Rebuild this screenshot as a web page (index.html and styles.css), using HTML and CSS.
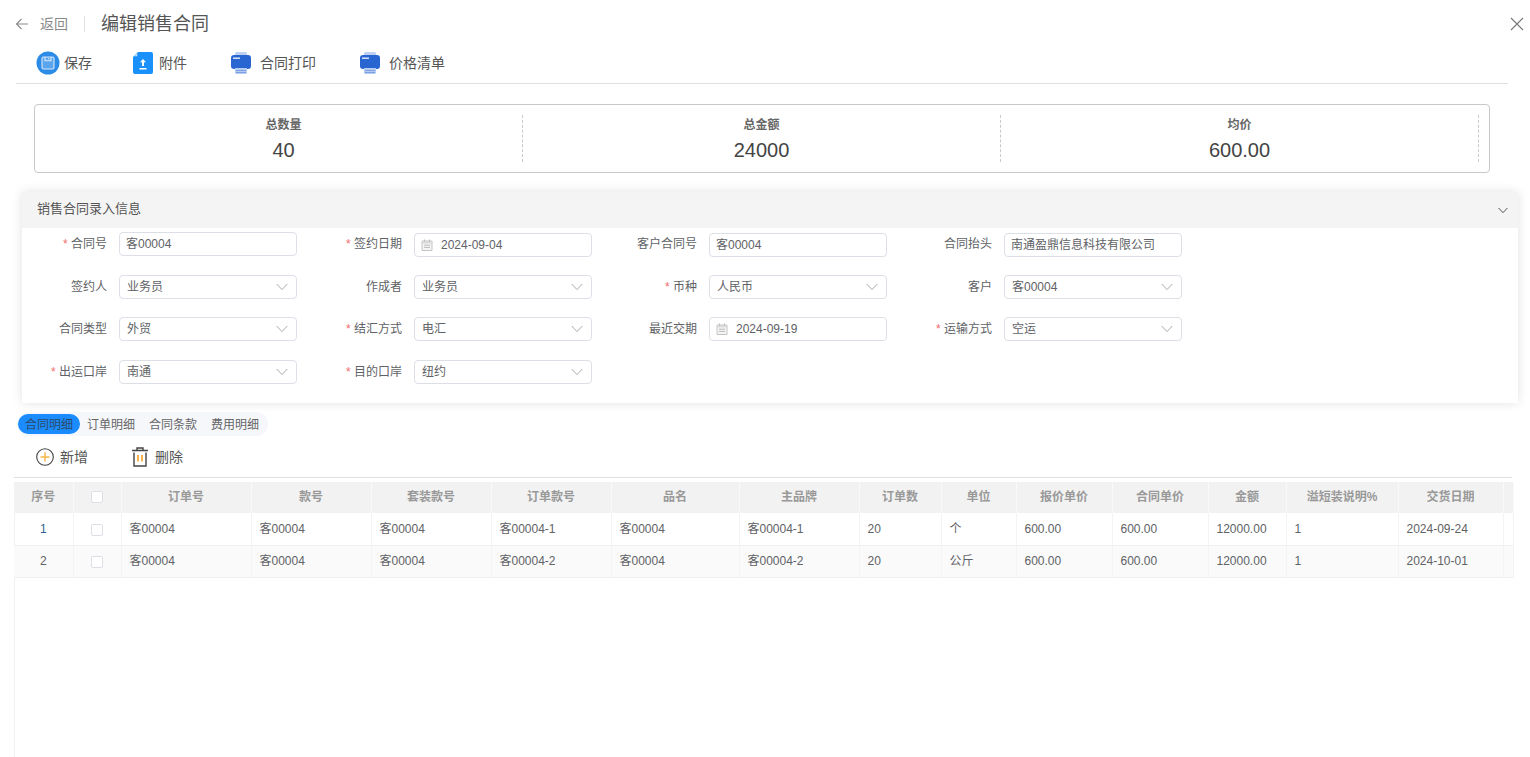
FILE: index.html
```html
<!DOCTYPE html>
<html lang="zh-CN">
<head>
<meta charset="utf-8">
<title>编辑销售合同</title>
<link rel="stylesheet" href="styles.css">
</head>
<body>
<svg class="defs" width="0" height="0" aria-hidden="true">
  <defs>
    <symbol id="chev" viewBox="0 0 12 8"><path d="M.7 1l5.300 5.600L11.300 1" fill="none" stroke="currentColor" stroke-width="1"/></symbol>
    <symbol id="cal" viewBox="0 0 12 12"><path d="M1 2h10v9.500H1z" fill="#f4f4f4" stroke="#c4c4c4"/><path d="M1 2h10v2.300H1z" fill="#d8d8d8"/><path d="M3.500.500v2M8.500.500v2M3 6.200h6M3 8.400h6" stroke="#bbb" fill="none"/></symbol>
    <symbol id="printer" viewBox="0 0 20 22">
      <path d="M5.500 0h9A1.500 1.500 0 0 1 16 1.500V5H4V1.500A1.500 1.500 0 0 1 5.500 0z" fill="#bcd0f2"/>
      <rect y="3" width="20" height="14" rx="3" fill="#2a66d2"/>
      <path d="M4 16h12v4.500a1.500 1.500 0 0 1-1.500 1.500h-9A1.500 1.500 0 0 1 4 20.500z" fill="#b7ccf1"/>
      <rect x="2" y="5.500" width="7" height="1.400" fill="#e6eefc"/>
      <path d="M5 18.500h10M5 20.500h10" stroke="#7da0e4" stroke-width="1"/>
    </symbol>
  </defs>
</svg>

<header class="topbar">
  <svg class="back-icon" viewBox="0 0 14 12" width="14" height="12"><path d="M13 6H1.500M6.500 1l-5 5 5 5" fill="none" stroke="#8a8a8a" stroke-width="1.100"/></svg>
  <span class="back-text">返回</span>
  <span class="top-sep"></span>
  <h1 class="title">编辑销售合同</h1>
  <svg class="close-icon" viewBox="0 0 14 14" width="14" height="14"><path d="M1 1l12 12M13 1L1 13" stroke="#777" stroke-width="1.100" fill="none"/></svg>
</header>

<nav class="toolbar">
  <button class="tool tool-save">
    <svg viewBox="0 0 24 24" width="24" height="24"><circle cx="12" cy="12" r="11.500" fill="#2b8be6"/><rect x="6" y="6" width="12" height="12" rx="1.500" fill="#5aa5ec" stroke="#d5e8fb" stroke-width="1.100"/><path d="M9 6v3.800h6V6" fill="none" stroke="#d5e8fb" stroke-width="1.100"/><path d="M12.800 7v1.500" stroke="#d5e8fb"/></svg>
    <span>保存</span>
  </button>
  <button class="tool tool-attach">
    <svg viewBox="0 0 20 22" width="20" height="22"><path d="M5 0h13a2 2 0 0 1 2 2v18a2 2 0 0 1-2 2H2a2 2 0 0 1-2-2V5z" fill="#1a90fb"/><path d="M1 4.300L4.300 1v3.300z" fill="#bfe0fd"/><path d="M10 7l3 3.200h-2V14H9v-3.800H7zM6.500 16h7v1.500h-7z" fill="#fff"/></svg>
    <span>附件</span>
  </button>
  <button class="tool tool-print">
    <svg width="20" height="22"><use href="#printer"/></svg>
    <span>合同打印</span>
  </button>
  <button class="tool tool-price">
    <svg width="20" height="22"><use href="#printer"/></svg>
    <span>价格清单</span>
  </button>
</nav>

<section class="summary">
  <div class="stat"><div class="stat-label">总数量</div><div class="stat-value">40</div></div>
  <div class="stat"><div class="stat-label">总金额</div><div class="stat-value">24000</div></div>
  <div class="stat"><div class="stat-label">均价</div><div class="stat-value">600.00</div></div>
</section>

<section class="panel">
  <div class="panel-head">
    <span>销售合同录入信息</span>
    <svg width="10" height="7" class="panel-chev"><use href="#chev"/></svg>
  </div>
  <div class="form">
    <div class="field"><label class="req">合同号</label><div class="control">客00004</div></div>
    <div class="field"><label class="req">签约日期</label><div class="control date"><svg width="12" height="12"><use href="#cal"/></svg><span>2024-09-04</span></div></div>
    <div class="field"><label>客户合同号</label><div class="control">客00004</div></div>
    <div class="field"><label>合同抬头</label><div class="control">南通盈鼎信息科技有限公司</div></div>

    <div class="field"><label>签约人</label><div class="control select"><span>业务员</span><svg width="12" height="8"><use href="#chev"/></svg></div></div>
    <div class="field"><label>作成者</label><div class="control select"><span>业务员</span><svg width="12" height="8"><use href="#chev"/></svg></div></div>
    <div class="field"><label class="req">币种</label><div class="control select"><span>人民币</span><svg width="12" height="8"><use href="#chev"/></svg></div></div>
    <div class="field"><label>客户</label><div class="control select"><span>客00004</span><svg width="12" height="8"><use href="#chev"/></svg></div></div>

    <div class="field"><label>合同类型</label><div class="control select"><span>外贸</span><svg width="12" height="8"><use href="#chev"/></svg></div></div>
    <div class="field"><label class="req">结汇方式</label><div class="control select"><span>电汇</span><svg width="12" height="8"><use href="#chev"/></svg></div></div>
    <div class="field"><label>最近交期</label><div class="control date"><svg width="12" height="12"><use href="#cal"/></svg><span>2024-09-19</span></div></div>
    <div class="field"><label class="req">运输方式</label><div class="control select"><span>空运</span><svg width="12" height="8"><use href="#chev"/></svg></div></div>

    <div class="field"><label class="req">出运口岸</label><div class="control select"><span>南通</span><svg width="12" height="8"><use href="#chev"/></svg></div></div>
    <div class="field"><label class="req">目的口岸</label><div class="control select"><span>纽约</span><svg width="12" height="8"><use href="#chev"/></svg></div></div>
  </div>
</section>

<div class="tabs">
  <span class="tab active">合同明细</span>
  <span class="tab">订单明细</span>
  <span class="tab">合同条款</span>
  <span class="tab">费用明细</span>
</div>

<div class="subbar">
  <button class="tool tool-add">
    <svg viewBox="0 0 18 18" width="18" height="18"><circle cx="9" cy="9" r="8.300" fill="none" stroke="#444" stroke-width="1.100"/><path d="M9 4.500v9M4.500 9h9" stroke="#f7b64a" stroke-width="1.500"/></svg>
    <span>新增</span>
  </button>
  <button class="tool tool-del">
    <svg viewBox="0 0 16 20" width="16" height="20"><path d="M0 3.500h16M5 3V1h6v2" fill="none" stroke="#444" stroke-width="1.400"/><path d="M2 5.500v13.500h12V5.500" fill="none" stroke="#444" stroke-width="1.400"/><path d="M6 8v6.500M10 8v6.500" stroke="#f7b64a" stroke-width="2"/></svg>
    <span>删除</span>
  </button>
</div>

<div class="grid-wrap">
<table class="grid">
  <colgroup>
    <col class="c-no"><col class="c-chk"><col class="c-130"><col class="c-120"><col class="c-120"><col class="c-120"><col class="c-128"><col class="c-120"><col class="c-82"><col class="c-75"><col class="c-96"><col class="c-96"><col class="c-78"><col class="c-112"><col class="c-105"><col class="c-10">
  </colgroup>
  <thead>
    <tr>
      <th>序号</th><th><i class="chk"></i></th><th>订单号</th><th>款号</th><th>套装款号</th><th>订单款号</th><th>品名</th><th>主品牌</th><th>订单数</th><th>单位</th><th>报价单价</th><th>合同单价</th><th>金额</th><th>溢短装说明%</th><th>交货日期</th><th></th>
    </tr>
  </thead>
  <tbody>
    <tr>
      <td class="num first">1</td><td class="num"><i class="chk"></i></td><td>客00004</td><td>客00004</td><td>客00004</td><td>客00004-1</td><td>客00004</td><td>客00004-1</td><td>20</td><td>个</td><td>600.00</td><td>600.00</td><td>12000.00</td><td>1</td><td>2024-09-24</td><td></td>
    </tr>
    <tr>
      <td class="num">2</td><td class="num"><i class="chk"></i></td><td>客00004</td><td>客00004</td><td>客00004</td><td>客00004-2</td><td>客00004</td><td>客00004-2</td><td>20</td><td>公斤</td><td>600.00</td><td>600.00</td><td>12000.00</td><td>1</td><td>2024-10-01</td><td></td>
    </tr>
  </tbody>
</table>
</div>
</body>
</html>
```
FILE: styles.css
```css
* { box-sizing: border-box; }
html, body { margin: 0; height: 757px; overflow: hidden; }
body {
  background: #fff;
  color: #606266;
  font-family: "Liberation Sans", "Noto Sans CJK SC", sans-serif;
  font-size: 12px;
}
.defs { position: absolute; }
button { font: inherit; color: inherit; background: none; border: 0; padding: 0; }

.topbar { height: 46px; display: flex; align-items: center; padding: 2px 6px 0 15px; }
.back-icon { margin-right: 11px; }
.back-text { font-size: 14px; color: #8a8a8a; line-height: 20px; }
.top-sep { width: 1px; height: 16px; background: #e2e4e8; margin: 0 16px; }
.title { margin: 0; font-size: 18px; font-weight: 400; color: #555; flex: 1; line-height: 24px; }

.toolbar {
  height: 38px; margin: 0 22px 0 16px; padding: 0 0 4px 20px;
  display: flex; align-items: center; border-bottom: 1px solid #e0e0e0;
}
.tool { display: flex; align-items: center; font-size: 14px; color: #555; line-height: 20px; }
.tool-save { gap: 4px; width: 97px; }
.tool-attach { gap: 6px; width: 98px; }
.tool-print { gap: 9px; width: 129px; }
.tool-price { gap: 9px; }

.summary {
  margin: 20px 40px 0 34px; height: 69px; padding: 10px;
  border: 1px solid #c8c9cc; border-radius: 4px; display: flex;
}
.stat { width: 478px; height: 47px; border-right: 1px dashed #c8c9cc; text-align: center; padding-top: 2px; }
.stat-label { font-size: 12px; font-weight: 700; color: #666; line-height: 16px; }
.stat-value { font-size: 20px; color: #444; line-height: 26px; margin-top: 4px; }

.panel {
  margin: 19px 12px 0 22px; height: 211px; background: #fff;
  box-shadow: 0 0 10px rgba(0,0,0,.12);
}
.panel-head {
  height: 36px; background: #f4f4f4; display: flex; align-items: center; justify-content: space-between;
  padding: 0 10px 3px 15px; font-size: 13px; color: #555; line-height: 16px;
}
.panel-chev { color: #333; margin-top: 3px; }
.form { display: grid; grid-template-columns: repeat(4, 295px) 1fr; grid-auto-rows: 42.200px; padding-top: 5px; }
.form .field:nth-child(4n) { grid-column: 4 / 6; }
.field { display: flex; align-items: flex-start; }
.field label {
  width: 85px; margin-right: 12px; text-align: right; line-height: 22px; font-size: 12px; color: #606266; flex: none;
}
.field:nth-child(n+5) label { line-height: 24px; }
.field label.req::before { content: "* "; color: #f56c6c; }
.control {
  width: 178px; height: 24px; border: 1px solid #dcdfe6; border-radius: 4px;
  padding: 0 6px; display: flex; align-items: center; font-size: 12px; color: #606266; background: #fff;
  line-height: 16px;
}
.field:first-child .control { margin-top: -1px; }
.select { justify-content: space-between; padding: 0 8px 0 7px; }
.select svg { color: #aaa; }
.date { gap: 8px; }

.tabs {
  margin: 9px 0 0 17px; width: 251px; height: 24px; background: #f5f7fb; border-radius: 12px;
  display: flex; align-items: center; padding-left: 1px; font-size: 12px;
}
.tab { height: 20px; line-height: 22px; width: 62px; text-align: center; color: #666; white-space: nowrap; }
.tab.active { background: #1a8cff; border-radius: 10px; color: #2c4a6a; }

.subbar {
  height: 42px; margin: 0 18px 0 14px; padding: 0 0 0 22px; display: flex; align-items: center;
  border-bottom: 1px solid #e0e0e0;
}
.tool-add { gap: 6px; width: 96px; }
.tool-del { gap: 7px; }

.grid-wrap { margin: 4px 17px 0 14px; height: 275px; border-left: 1px solid #f0f0f0; }
.grid { border-collapse: collapse; table-layout: fixed; width: 1499px; margin-left: -1px; }
.c-no { width: 59px; } .c-chk { width: 48px; } .c-130 { width: 130px; } .c-120 { width: 120px; }
.c-128 { width: 128px; } .c-82 { width: 82px; } .c-75 { width: 75px; } .c-96 { width: 96px; }
.c-78 { width: 78px; } .c-112 { width: 112px; } .c-105 { width: 105px; } .c-10 { width: 10px; }
.grid th {
  height: 31px; background: #f2f2f2; color: #999; font-size: 12px; font-weight: 700; text-align: center;
  border-right: 1px solid #f9f9f9; padding: 0 0 2px; line-height: 16px;
}
.grid td {
  height: 32px; padding: 0 8px; color: #606266; font-size: 12px; white-space: nowrap; overflow: hidden;
  border-right: 1px solid #f4f4f4; border-bottom: 1px solid #f0f0f0; line-height: 16px;
}
.grid tbody tr:nth-child(2) td { background: #fafafa; }
.grid td.num { text-align: center; padding: 0; }
.grid td.first { color: #2f5f8f; }
.chk {
  display: inline-block; width: 12px; height: 12px; vertical-align: middle; background: #fff;
  border: 1px solid #dcdfe6; border-radius: 2px;
}
```
